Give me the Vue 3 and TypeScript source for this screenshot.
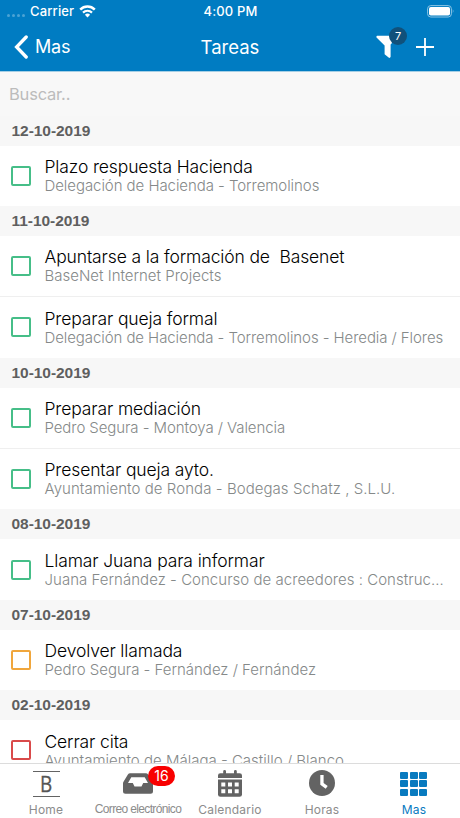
<script setup lang="ts">
interface Task {
  title: string
  detail: string
  tracking: number
  status: 'green' | 'orange' | 'red'
}
interface Group {
  date: string
  tasks: Task[]
}

const groups: Group[] = [
  {
    date: '12-10-2019',
    tasks: [{ title: 'Plazo respuesta Hacienda', detail: 'Delegación de Hacienda - Torremolinos', tracking: -0.06, status: 'green' }],
  },
  {
    date: '11-10-2019',
    tasks: [
      { title: 'Apuntarse a la formación de  Basenet', detail: 'BaseNet Internet Projects', tracking: 0, status: 'green' },
      { title: 'Preparar queja formal', detail: 'Delegación de Hacienda - Torremolinos - Heredia / Flores', tracking: -0.08, status: 'green' },
    ],
  },
  {
    date: '10-10-2019',
    tasks: [
      { title: 'Preparar mediación', detail: 'Pedro Segura - Montoya / Valencia', tracking: -0.08, status: 'green' },
      { title: 'Presentar queja ayto.', detail: 'Ayuntamiento de Ronda - Bodegas Schatz , S.L.U.', tracking: 0.06, status: 'green' },
    ],
  },
  {
    date: '08-10-2019',
    tasks: [{ title: 'Llamar Juana para informar', detail: 'Juana Fernández - Concurso de acreedores : Construc…', tracking: 0.03, status: 'green' }],
  },
  {
    date: '07-10-2019',
    tasks: [{ title: 'Devolver llamada', detail: 'Pedro Segura - Fernández / Fernández', tracking: -0.01, status: 'orange' }],
  },
  {
    date: '02-10-2019',
    tasks: [{ title: 'Cerrar cita', detail: 'Ayuntamiento de Málaga - Castillo / Blanco', tracking: 0, status: 'red' }],
  },
]
</script>

<template>
  <div class="screen">
    <header class="top">
      <div class="status">
        <div class="carrier">
          <span class="dots"><i v-for="n in 4" :key="n"></i></span>
          <span>Carrier</span>
          <svg class="wifi" width="17" height="13" viewBox="0 0 17 13">
            <path d="M1.2 4.6a10.4 10.4 0 0 1 14.6 0" fill="none" stroke="#fff" stroke-width="2.5" />
            <path d="M4 7.6a6.4 6.4 0 0 1 9 0" fill="none" stroke="#fff" stroke-width="2.2" />
            <path d="M8.5 12.4 5.9 9.8a3.7 3.7 0 0 1 5.2 0z" fill="#fff" />
          </svg>
        </div>
        <span class="time">4:00 PM</span>
        <svg class="battery" width="28" height="13" viewBox="0 0 28 13">
          <rect x=".6" y=".6" width="23.8" height="11.4" rx="3.2" fill="none" stroke="#8cc5e5" stroke-width="1" />
          <rect x="2" y="2" width="21" height="8.6" rx="1.8" fill="#fff" />
          <path d="M25.8 4.3q1.6 2 0 4z" fill="#8cc5e5" />
        </svg>
      </div>
      <nav class="nav">
        <div class="back">
          <svg width="15" height="24" viewBox="0 0 15 24">
            <path d="M12.2 2 2.6 12l9.6 10" fill="none" stroke="#fff" stroke-width="3.3" stroke-linecap="round" stroke-linejoin="miter" />
          </svg>
          <span>Mas</span>
        </div>
        <h1>Tareas</h1>
        <div class="actions">
          <div class="filter">
            <svg width="22" height="24" viewBox="0 0 22 24">
              <path d="M1 .8h20q1 .7.2 1.7L14.6 9.6v12.200q-.5 1.700-2 .8l-4-3.300V10.500L.5 2.600Q0 1.300 1 .8z" fill="#fff" />
            </svg>
            <span class="count">7</span>
          </div>
          <svg class="plus" width="18" height="18" viewBox="0 0 18 18">
            <path d="M9 0v18M0 9h18" stroke="#fff" stroke-width="1.8" />
          </svg>
        </div>
      </nav>
    </header>

    <div class="search">Buscar..</div>

    <main class="list">
      <section v-for="g in groups" :key="g.date">
        <h2>{{ g.date }}</h2>
        <article v-for="t in g.tasks" :key="t.title" class="task">
          <span class="box" :class="t.status"></span>
          <div class="text">
            <p class="title">{{ t.title }}</p>
            <p class="detail" :style="{ letterSpacing: t.tracking + 'px' }">{{ t.detail }}</p>
          </div>
        </article>
      </section>
    </main>

    <footer class="tabs">
      <div class="tab">
        <div class="icon home"><span>B</span></div>
        <span class="label">Home</span>
      </div>
      <div class="tab">
        <div class="icon">
          <svg width="30" height="21" viewBox="0 0 30 21">
            <path d="M7.2.3h15.6q1.5 0 2.3 1.3l4.4 7.2q.5.8.5 1.7v7.7q0 2.5-2.5 2.5h-25Q0 20.7 0 18.2v-7.7q0-.9.5-1.7L4.9 1.6Q5.700.3 7.2.3z" fill="#636363" />
            <path d="M8.3 4.2h13.4l3.3 5.9h-4.8l-1.7 3.400h-7l-1.700-3.400H5z" fill="#fff" />
          </svg>
          <span class="badge">16</span>
        </div>
        <span class="label mail">Correo electrónico</span>
      </div>
      <div class="tab">
        <div class="icon">
          <svg width="24" height="27" viewBox="0 0 24 27">
            <path d="M2.400 3.200H5.200V1.300q0-1.300 1.400-1.300t1.400 1.300V3.200h8V1.300q0-1.300 1.400-1.300t1.400 1.300V3.200h2.800Q24 3.200 24 5.600v2.300H0V5.600q0-2.400 2.400-2.400z" fill="#636363" />
            <path d="M0 9.500h24v15q0 2.300-2.400 2.300H2.400Q0 26.800 0 24.500z" fill="#636363" />
            <path d="M3.300 12.500h4v4h-4zm6.700 0h4v4h-4zm6.700 0h4v4h-4zM3.300 19.300h4v4h-4zm6.700 0h4v4h-4zm6.700 0h4v4h-4z" fill="#fff" />
          </svg>
        </div>
        <span class="label">Calendario</span>
      </div>
      <div class="tab">
        <div class="icon">
          <svg width="26" height="26" viewBox="0 0 26 26">
            <circle cx="13" cy="13" r="13" fill="#636363" />
            <path d="M11.300 5h3.300v8l4.100 3-2 2.700-5.400-4z" fill="#fff" />
          </svg>
        </div>
        <span class="label">Horas</span>
      </div>
      <div class="tab active">
        <div class="icon grid"><i v-for="n in 9" :key="n"></i></div>
        <span class="label">Mas</span>
      </div>
    </footer>
  </div>
</template>

<style>
body {
  margin: 0;
  background: #fff;
}
</style>

<style scoped>
.screen {
  width: 460px;
  height: 818px;
  display: flex;
  flex-direction: column;
  overflow: hidden;
  background: #fff;
  font-family: Inter, "Liberation Sans", sans-serif;
}
.top {
  flex: none;
  height: 72px;
  box-sizing: border-box;
  background: #007cc2;
  border-bottom: 1px solid #a5cfe5;
  color: #fff;
}
.status {
  height: 22px;
  display: grid;
  grid-template-columns: 1fr auto 1fr;
  align-items: center;
  padding: 0 6px 0 7px;
  font-size: 13px;
  letter-spacing: 0.15px;
  font-weight: 500;
}
.carrier {
  display: flex;
  align-items: center;
}
.dots {
  display: flex;
  gap: 2px;
  width: 23px;
  padding-top: 8px;
}
.dots i {
  width: 3px;
  height: 3px;
  border-radius: 50%;
  background: #4ba3d4;
}
.wifi {
  margin-left: 5px;
}
.battery {
  justify-self: end;
  margin-right: -1px;
}
.nav {
  height: 49px;
  display: grid;
  grid-template-columns: 1fr auto 1fr;
  align-items: center;
  padding: 0 26px 0 14px;
}
.back {
  display: flex;
  align-items: center;
  gap: 6px;
  font-size: 18px;
  letter-spacing: -0.2px;
}
h1 {
  margin: 0;
  font-size: 18.5px;
  font-weight: 400;
  padding-left: 12px;
}
.actions {
  display: flex;
  justify-content: flex-end;
  align-items: center;
  gap: 18px;
}
.filter {
  position: relative;
  height: 24px;
}
.filter svg {
  display: block;
}
.count {
  position: absolute;
  left: 13px;
  top: -8px;
  width: 18px;
  height: 18px;
  border-radius: 50%;
  background: #10517b;
  font-size: 11px;
  line-height: 18px;
  text-align: center;
}
.search {
  flex: none;
  height: 43.5px;
  box-sizing: border-box;
  padding-left: 9px;
  background: #f8f8f8;
  color: #bcbcbc;
  font-size: 16.5px;
  letter-spacing: -0.2px;
  line-height: 44px;
}
.list {
  flex: 1;
  min-height: 0;
  overflow: hidden;
}
h2 {
  margin: 0;
  height: 30px;
  padding-left: 11.5px;
  background: #f7f7f7;
  color: #5f5f5f;
  font: bold 15.5px/30px "Liberation Sans", sans-serif;
  letter-spacing: -0.05px;
}
.task {
  height: 60.4px;
  display: flex;
  align-items: center;
  gap: 13.5px;
  padding-left: 11px;
}
.task + .task {
  border-top: 1px solid #efefef;
}
.box {
  flex: none;
  width: 20px;
  height: 20px;
  box-sizing: border-box;
  border: 2px solid;
  border-radius: 2px;
}
.green {
  border-color: #46be88;
}
.orange {
  border-color: #f0a63c;
}
.red {
  border-color: #d94a4a;
}
.text {
  padding-top: 1px;
  white-space: pre;
}
p {
  margin: 0;
}
.title {
  font-size: 17.5px;
  line-height: 20px;
  font-weight: 300;
  letter-spacing: -0.13px;
  color: #000;
}
.detail {
  font-size: 15px;
  line-height: 18.6px;
  font-weight: 300;
  color: #858989;
}
.tabs {
  flex: none;
  height: 55px;
  box-sizing: border-box;
  border-top: 1px solid #dcdcdc;
  background: #fff;
  display: grid;
  grid-template-columns: repeat(5, minmax(0, 1fr));
}
.tab {
  display: flex;
  flex-direction: column;
  align-items: center;
  color: #8c8c8c;
}
.icon {
  position: relative;
  height: 38px;
  display: flex;
  align-items: center;
  justify-content: center;
}
.label {
  font-size: 12px;
  line-height: 15px;
  letter-spacing: 0.2px;
}
.mail {
  font-family: "Liberation Sans", sans-serif;
  letter-spacing: -0.65px;
  white-space: nowrap;
}
.home {
  width: 27px;
  height: 26px;
  box-sizing: border-box;
  margin: 7px 0 5px;
  border: solid #636363;
  border-width: 1.5px 0;
}
.home span {
  font: 22px/22px "Open Sans", sans-serif;
  color: #555;
  transform: translateY(-1px) scaleX(0.86);
  -webkit-text-stroke: 0.3px #555;
}
.badge {
  position: absolute;
  left: 25px;
  top: 2px;
  width: 27px;
  height: 20px;
  border-radius: 10px;
  background: #f80000;
  color: #fff;
  font-size: 14px;
  line-height: 20px;
  text-align: center;
}
.grid {
  display: grid;
  grid-template-columns: repeat(3, 8px);
  grid-auto-rows: 7px;
  align-content: center;
  align-items: stretch;
  gap: 1.5px;
  padding-top: 1px;
  height: 37px;
  margin-right: 1px;
}
.grid i {
  background: #087abf;
  border-radius: 1px;
}
.active {
  color: #087abf;
}
</style>
